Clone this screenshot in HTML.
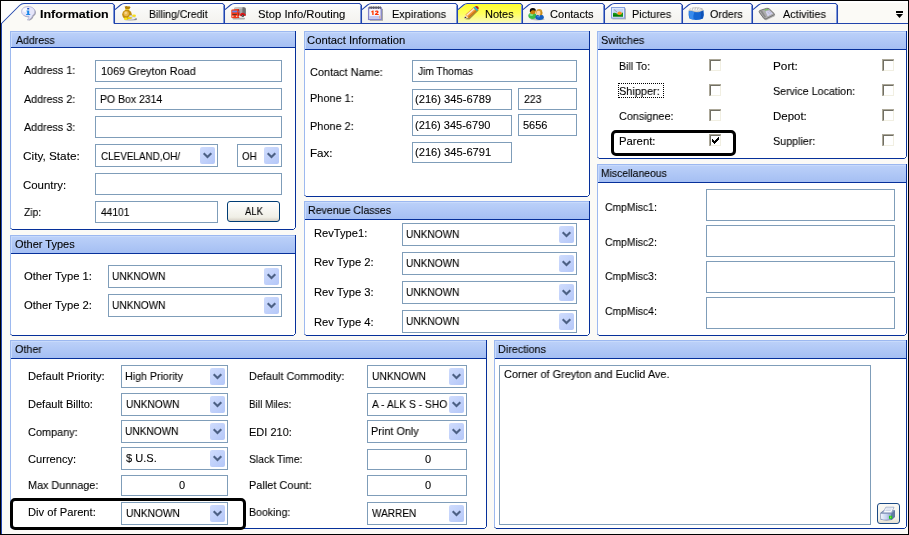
<!DOCTYPE html>
<html><head><meta charset="utf-8"><title>Company Profile</title>
<style>
html,body{margin:0;padding:0;}
body{width:909px;height:535px;position:relative;overflow:hidden;background:#fbfaf6;font-family:"Liberation Sans",sans-serif;font-size:11px;color:#000;}
.t{position:absolute;white-space:nowrap;line-height:13px;height:13px;transform-origin:0 0;will-change:transform;-webkit-text-stroke:0.1px #000;}
.frame{position:absolute;left:0;top:0;width:909px;height:535px;box-sizing:border-box;border:1px solid #000;z-index:5;pointer-events:none}
.frame:after{content:"";position:absolute;left:0;top:22px;width:1px;bottom:0;background:#2448b0}
.p{position:absolute;}
.ph{position:absolute;left:0;top:0;right:0;box-sizing:border-box;border-top:1px solid #9cb8f0;border-left:1px solid #9cb8f0;background:linear-gradient(#bcd1f9,#a5bff3);box-shadow:inset 1px 1px 0 #c8dafb;}
.pl{position:absolute;left:0;right:0;height:1px;background:#06309a;}
.pb{position:absolute;left:1px;right:1px;background:#fff;}
.pc{position:absolute;left:0;top:0;}
.i{position:absolute;border:1px solid #7f9db9;background:#fff;}
.cb{position:absolute;background:linear-gradient(135deg,#cfdcfd,#b4c7f8);border-radius:2px;}
.cb svg{position:absolute;left:0;top:0}
.ck{position:absolute;width:11px;height:11px;background:#fff;border-top:1px solid #aca899;border-left:1px solid #aca899;}
.ck i{position:absolute;left:0;top:0;width:9px;height:9px;border-top:1px solid #716f64;border-left:1px solid #716f64;border-right:1px solid #f1efe2;border-bottom:1px solid #f1efe2;}
.btn{position:absolute;border:1px solid #003c74;border-radius:3px;background:linear-gradient(#fff,#f0efe6 80%,#d6d0c5);}
.hl{position:absolute;border:3px solid #000;border-radius:5px;}
.foc{position:absolute;border:1px dotted #000;}
</style></head>
<body>
<div class="frame"></div>
<svg class="tabs" width="909" height="32" viewBox="0 0 909 32" style="position:absolute;left:0;top:0">
<defs><linearGradient id="yg" x1="0" y1="0" x2="0" y2="1"><stop offset="0" stop-color="#ffff28"/><stop offset="0.5" stop-color="#ffff5c"/><stop offset="1" stop-color="#f8f8c4"/></linearGradient><linearGradient id="ig" x1="0" y1="0" x2="0" y2="1"><stop offset="0" stop-color="#ffffff"/><stop offset="0.3" stop-color="#f9f9f7"/><stop offset="1" stop-color="#f3f2ee"/></linearGradient></defs>
<rect x="1" y="1" width="907" height="2" fill="#ffffff"/>
<path d="M1 1 H26 V4 L1 24Z" fill="#fefefd"/>
<path d="M752.5 23.5 V10 L758.5 5 Q760.5 3.5 762.5 3.5 H835.5 L837.5 5.5 V23.5 Z" fill="url(#ig)" stroke="none"/>
<path d="M753 4 H761 L753 10Z" fill="#fdfdfc"/>
<path d="M836.5 5.5 V23" fill="none" stroke="#7f99dc" stroke-width="1"/>
<path d="M753 9.6 L758.5 5 Q760.5 3.5 762.5 3.5 H835.5 L837.5 5.5 V23.5" fill="none" stroke="#2144ac" stroke-width="1.05"/>
<path d="M682.5 23.5 V10 L688.5 5 Q690.5 3.5 692.5 3.5 H750.5 L752.5 5.5 V23.5 Z" fill="url(#ig)" stroke="none"/>
<path d="M683 4 H691 L683 10Z" fill="#fdfdfc"/>
<path d="M751.5 5.5 V23" fill="none" stroke="#7f99dc" stroke-width="1"/>
<path d="M683 9.6 L688.5 5 Q690.5 3.5 692.5 3.5 H750.5 L752.5 5.5 V23.5" fill="none" stroke="#2144ac" stroke-width="1.05"/>
<path d="M604.5 23.5 V10 L610.5 5 Q612.5 3.5 614.5 3.5 H680.5 L682.5 5.5 V23.5 Z" fill="url(#ig)" stroke="none"/>
<path d="M605 4 H613 L605 10Z" fill="#fdfdfc"/>
<path d="M681.5 5.5 V23" fill="none" stroke="#7f99dc" stroke-width="1"/>
<path d="M605 9.6 L610.5 5 Q612.5 3.5 614.5 3.5 H680.5 L682.5 5.5 V23.5" fill="none" stroke="#2144ac" stroke-width="1.05"/>
<path d="M522.5 23.5 V10 L528.5 5 Q530.5 3.5 532.5 3.5 H602.5 L604.5 5.5 V23.5 Z" fill="url(#ig)" stroke="none"/>
<path d="M523 4 H531 L523 10Z" fill="#fdfdfc"/>
<path d="M603.5 5.5 V23" fill="none" stroke="#7f99dc" stroke-width="1"/>
<path d="M523 9.6 L528.5 5 Q530.5 3.5 532.5 3.5 H602.5 L604.5 5.5 V23.5" fill="none" stroke="#2144ac" stroke-width="1.05"/>
<path d="M457.5 23.5 V10 L463.5 5 Q465.5 3.5 467.5 3.5 H520.5 L522.5 5.5 V23.5 Z" fill="url(#yg)" stroke="none"/>
<path d="M458 4 H466 L458 10Z" fill="#fdfdfc"/>
<path d="M521.5 5.5 V23" fill="none" stroke="#7f99dc" stroke-width="1"/>
<path d="M458 9.6 L463.5 5 Q465.5 3.5 467.5 3.5 H520.5 L522.5 5.5 V23.5" fill="none" stroke="#2144ac" stroke-width="1.05"/>
<path d="M361.5 23.5 V10 L367.5 5 Q369.5 3.5 371.5 3.5 H455.5 L457.5 5.5 V23.5 Z" fill="url(#ig)" stroke="none"/>
<path d="M362 4 H370 L362 10Z" fill="#fdfdfc"/>
<path d="M456.5 5.5 V23" fill="none" stroke="#7f99dc" stroke-width="1"/>
<path d="M362 9.6 L367.5 5 Q369.5 3.5 371.5 3.5 H455.5 L457.5 5.5 V23.5" fill="none" stroke="#2144ac" stroke-width="1.05"/>
<path d="M224.5 23.5 V10 L230.5 5 Q232.5 3.5 234.5 3.5 H359.5 L361.5 5.5 V23.5 Z" fill="url(#ig)" stroke="none"/>
<path d="M225 4 H233 L225 10Z" fill="#fdfdfc"/>
<path d="M360.5 5.5 V23" fill="none" stroke="#7f99dc" stroke-width="1"/>
<path d="M225 9.6 L230.5 5 Q232.5 3.5 234.5 3.5 H359.5 L361.5 5.5 V23.5" fill="none" stroke="#2144ac" stroke-width="1.05"/>
<path d="M114.5 23.5 V10 L120.5 5 Q122.5 3.5 124.5 3.5 H222.5 L224.5 5.5 V23.5 Z" fill="url(#ig)" stroke="none"/>
<path d="M115 4 H123 L115 10Z" fill="#fdfdfc"/>
<path d="M223.5 5.5 V23" fill="none" stroke="#7f99dc" stroke-width="1"/>
<path d="M115 9.6 L120.5 5 Q122.5 3.5 124.5 3.5 H222.5 L224.5 5.5 V23.5" fill="none" stroke="#2144ac" stroke-width="1.05"/>
<path d="M115 23.5 H908" stroke="#2144ac" stroke-width="1.05" fill="none"/>
<path d="M1.5 23.5 L19.5 5.5 Q21.5 3.5 24 3.5 H112.5 L114.5 5.5 V24 V32 H1.5 Z" fill="#fbfaf6" stroke="none"/>
<path d="M113.5 5.5 V23.5" fill="none" stroke="#7f99dc" stroke-width="1"/>
<path d="M1.5 23.5 L19.5 5.5 Q21.5 3.5 24 3.5 H112.5 L114.5 5.5 V24" fill="none" stroke="#2144ac" stroke-width="1.05"/>
<rect x="896" y="11" width="7" height="2" fill="#000"/><path d="M896 14 H903 L899.5 18 Z" fill="#000"/>
<g transform="translate(21,6)">
<path d="M8 1.6 C4 1.6 1.6 3.8 1.6 6.4 C1.6 9 4 11.2 8 11.2 C8.3 11.2 8.6 11.2 8.9 11.1 C9 12.6 8.3 13.8 7.2 14.8 C10.2 14.4 12 12.6 12.6 10.2 C14 9.3 14.9 8 14.9 6.4 C14.9 3.8 12 1.6 8 1.6Z" fill="#77778c" opacity="0.7"/>
<path d="M7 0.5 C3 0.5 0.5 2.8 0.5 5.5 C0.5 8.2 3 10.4 7 10.4 C7.3 10.4 7.6 10.4 7.9 10.3 C8 11.8 7.3 13 6.2 14 C9.2 13.6 11 11.8 11.6 9.4 C13 8.5 13.8 7.2 13.8 5.5 C13.8 2.8 11 0.5 7 0.5Z" fill="#e6e6fa" stroke="#b0b0d4" stroke-width="0.8"/>
<ellipse cx="5" cy="4" rx="3.2" ry="2" fill="#fff" opacity="0.8"/>
<rect x="6.2" y="2" width="2" height="1.5" fill="#1a50c8"/>
<path d="M5.5 4.5 H8.2 V8 H9.2 V9 H5.2 V8 H6.2 V5.5 H5.5Z" fill="#1a86e8"/>
</g>
<g transform="translate(122,6)">
<ellipse cx="8.5" cy="13.6" rx="6.5" ry="1.3" fill="#777" opacity="0.35"/>
<path d="M2.6 0.6 Q4.6 -0.4 6 0.5 Q7.6 -0.1 8.6 1.2 L7 3.5 H3.6 Z" fill="#b4820a"/>
<rect x="3.3" y="3.1" width="4" height="1.2" fill="#f4dc2c"/>
<circle cx="5" cy="8.6" r="4.8" fill="#c48e0c"/>
<circle cx="4.2" cy="7.6" r="2.6" fill="#eebc58" opacity="0.9"/>
<circle cx="3.8" cy="7" r="1.2" fill="#f8d890" opacity="0.9"/>
<ellipse cx="13.2" cy="13" rx="1.9" ry="1.1" fill="#6a6a6a" opacity="0.7"/>
<ellipse cx="3.8" cy="12.8" rx="1.9" ry="1.2" fill="#f8e418"/>
<ellipse cx="7.8" cy="11.7" rx="2.2" ry="1.2" fill="#f2d614"/>
<ellipse cx="8.8" cy="10.2" rx="1.7" ry="0.9" fill="#e4e8f8" stroke="#9aa0c0" stroke-width="0.3"/>
<ellipse cx="12" cy="9.8" rx="2" ry="1.2" fill="#f8e01c"/>
<ellipse cx="11.6" cy="12.2" rx="2" ry="1.1" fill="#f0f2fc" stroke="#9aa0c0" stroke-width="0.3"/>
</g>
<g transform="translate(231,7)">
<rect x="1.4" y="10.8" width="12.6" height="1.6" rx="0.8" fill="#666" opacity="0.5"/>
<path d="M3.2 1.6 Q3.2 0.6 4.4 0.5 L12.6 0.2 Q14.8 0.2 14.8 2 V8.4 L8 8.8 L3.2 6Z" fill="#a6a6a6"/>
<path d="M11.4 0.3 L12.6 0.2 Q14.8 0.2 14.8 2 V8.4 L11.4 8.6Z" fill="#707070"/>
<path d="M3.2 1.6 Q3.2 0.6 4.4 0.5 L11.4 0.3 V1.6 L3.2 2.4Z" fill="#c4c4c4"/>
<path d="M9 7.4 Q9.4 5.8 11.6 5.8 Q13.8 5.8 14.6 7.6 L14.6 8.8 L9 9.2Z" fill="#e41414"/>
<circle cx="11.8" cy="8.8" r="1.3" fill="#303030"/>
<circle cx="11.8" cy="8.8" r="0.5" fill="#c8c8c8"/>
<path d="M0.3 3.2 Q0.3 2.4 1.2 2.4 L6.6 2.1 Q8 2.1 8.2 3.4 L8.5 10.6 Q5 11.6 0.3 10.8Z" fill="#f23816"/>
<path d="M6.8 2.1 Q8 2.1 8.2 3.4 L8.5 10.6 L7.2 11 V2.2Z" fill="#c41606"/>
<rect x="1.2" y="3.6" width="5" height="1.8" fill="#6c88e8"/>
<rect x="7.3" y="3.8" width="0.9" height="1.7" fill="#5c78d8"/>
<rect x="1.4" y="7" width="4.4" height="1.1" fill="#5c3428"/>
<rect x="1.2" y="8.7" width="1.3" height="1" fill="#fff"/>
<rect x="5" y="8.7" width="1.3" height="1" fill="#fff"/>
<circle cx="8.6" cy="9.6" r="1" fill="#f0f0f0"/>
</g>
<g transform="translate(368,6)">
<rect x="1.8" y="2.8" width="13.2" height="12" fill="#666" opacity="0.55"/>
<rect x="0.6" y="1.8" width="12.6" height="11.6" fill="#f4f4fd" stroke="#8484c8" stroke-width="1.3"/>
<rect x="1" y="10" width="11.6" height="2.8" fill="#c4c8f0"/>
<rect x="11.4" y="9.6" width="0.9" height="3" fill="#f0a060"/>
<path d="M2 0.3 V3 M3.7 0.3 V3 M5.4 0.3 V3 M7.1 0.3 V3 M8.8 0.3 V3 M10.5 0.3 V3 M12.2 0.3 V3" stroke="#505058" stroke-width="0.9"/>
<path d="M1.6 1.4 H12.6" stroke="#606068" stroke-width="1"/>
<path d="M3.2 5.6 L4.8 4.6 H5.6 V9 H4.2 V6 L3.2 6.4Z" fill="#ff3c00"/>
<path d="M7 5.8 Q7 4.6 8.8 4.6 Q10.6 4.6 10.6 5.9 Q10.6 6.8 8.8 7.9 H10.7 V9 H6.9 V8 Q9.2 6.6 9.2 6 Q9.2 5.6 8.8 5.6 Q8.3 5.6 8.3 6.2Z" fill="#ff3000"/>
</g>
<g transform="translate(464,6)">
<path d="M1.4 13.2 L5.4 13.6 L14.6 4.6 L13.4 2.6Z" fill="#4a3a10" opacity="0.55"/>
<path d="M0.5 12.2 L1.4 8.6 L4.9 11.9Z" fill="#f8dcae"/>
<path d="M0.5 12.2 L1 10.4 L2.6 11.9Z" fill="#10104e"/>
<path d="M1.4 8.6 L9.4 1.6 L12.8 4.9 L4.9 11.9Z" fill="#f0983a"/>
<path d="M2.2 8.8 L9.9 2.1 L10.9 3 L3.2 9.8Z" fill="#fdebd0"/>
<path d="M4 10.9 L11.9 4 L12.8 4.9 L4.9 11.9Z" fill="#c87418"/>
<path d="M9.4 1.6 L10.9 0.4 L14.2 3.6 L12.8 4.9Z" fill="#34a4ee"/>
<path d="M9.4 1.6 L9.9 1.2 L13.3 4.5 L12.8 4.9Z" fill="#44c05c"/>
<path d="M10.9 0.4 Q12.6 -0.8 14.2 0.8 Q15.4 2.2 14.2 3.6Z" fill="#b42020"/>
</g>
<g transform="translate(528,8)">
<ellipse cx="9.6" cy="11.2" rx="7" ry="1.2" fill="#666" opacity="0.4"/>
<ellipse cx="4.4" cy="7.8" rx="4.1" ry="3.1" fill="#3cbc44"/>
<ellipse cx="3.4" cy="6.8" rx="1.9" ry="1.2" fill="#8cec94" opacity="0.85"/>
<circle cx="4.8" cy="3.3" r="2.9" fill="#cc8008"/>
<path d="M1.8 3.2 Q1.7 0 4.8 0 Q7.9 0 7.8 2.8 Q5.8 1.8 4.2 2.3 Q2.9 2.8 2.5 4.2Z" fill="#0c0c0c"/>
<ellipse cx="11.6" cy="9.2" rx="4.2" ry="2.7" fill="#125ec0"/>
<ellipse cx="10.4" cy="8.6" rx="1.6" ry="0.9" fill="#4a90e8" opacity="0.8"/>
<path d="M10.5 6.6 L11.3 8.4 L12.1 6.6Z" fill="#c4ecff"/>
<circle cx="11.2" cy="4.2" r="3.1" fill="#d49c2c"/>
<path d="M13.4 2.4 Q14.9 4 14 7.2 L12.4 6.8Z" fill="#c48c1c"/>
<ellipse cx="10.5" cy="4.9" rx="1.9" ry="2.2" fill="#ffd2a4"/>
</g>
<g transform="translate(611,7)">
<rect x="1.4" y="1.4" width="13.6" height="11" fill="#666" opacity="0.45"/>
<rect x="0.5" y="0.5" width="13" height="10.6" fill="#dfe9fc" stroke="#86a2e2" stroke-width="1"/>
<rect x="2" y="2" width="10" height="7.6" fill="#c6d6f6"/>
<path d="M2 6 Q5 5 7 7.4 L12 5.4 V9.6 H2Z" fill="#1c9c1c"/>
<path d="M2 7.6 Q5 7 12 9 V9.6 H2Z" fill="#087808"/>
<ellipse cx="8.6" cy="6.3" rx="2.2" ry="1.7" fill="#ff9020"/>
<path d="M3 2.6 L6 5" stroke="#808890" stroke-width="0.7"/>
</g>
<g transform="translate(688,7)">
<path d="M1.6 1.8 Q8 -1 14.6 1.6 L15 5 H1.4Z" fill="#b8b8b8"/>
<path d="M2.4 1.8 L4 0.6 L5.2 1.8 L6.4 0.4 L7.8 1.8 L9 0.3 L10.4 1.8 L11.6 0.5 L13 1.9 L14 3.6 H2.2Z" fill="#f6f6f6"/>
<path d="M3 3 H13.4 L14.2 4.6 H2.2Z" fill="#e2e2e2"/>
<path d="M4.4 1.2 V3 M7 1 V3 M9.6 1 V3 M12 1.2 V3" stroke="#9a9a9a" stroke-width="0.5"/>
<path d="M0.7 3.6 Q4 3 6.4 4.6 Q10 5.8 15.4 3 Q16.4 8 15 11.4 Q8 14.6 1.4 11.6 Q0.2 8 0.7 3.6Z" fill="#1566d2"/>
<path d="M1.2 4.2 Q4 3.8 6.2 5.2 Q5 8 5.6 12.6 Q3 12.2 1.9 11.4 Q0.8 8 1.2 4.2Z" fill="#3e92f2" opacity="0.85"/>
<path d="M12.6 4.8 Q14 4.4 15.2 3.6 Q16 8 14.8 11.2 Q13.6 11.9 12.4 12.3 Q13.4 8 12.6 4.8Z" fill="#0c4cae" opacity="0.8"/>
<path d="M0.7 3.6 Q4 3 6.4 4.6 Q10 5.8 15.4 3" fill="none" stroke="#f6dcb4" stroke-width="0.6"/>
</g>
<g transform="translate(758,8)">
<path d="M1.8 3.2 L8.6 1 Q10.4 0.6 11.6 1.6 L16.6 6.2 Q17 7 16 7.6 L8.4 11.4 Q7 12 6 11 L1.6 5 Q1 3.8 1.8 3.2Z" fill="#555" opacity="0.4" transform="translate(0.5,0.6)"/>
<path d="M1.6 2.6 L8.4 0.4 Q10.2 0 11.4 1 L16.2 5.6 Q16.8 6.4 15.8 7 L8.2 10.8 Q6.8 11.4 5.8 10.4 L1.4 4.4 Q0.8 3.2 1.6 2.6Z" fill="#adadad" stroke="#5e5e5e" stroke-width="0.8"/>
<path d="M7.6 3.6 L11.4 2.4 L14.8 5.6 L9.6 8.2Z" fill="#dcdcf6"/><path d="M8.6 5 L12.4 3.4 M9.2 6.4 L13.4 4.4 M9.6 3 L12 7 M11 2.6 L13.6 6.2" stroke="#a8a8c8" stroke-width="0.4"/>
<path d="M2.2 3 L4 2.4 L8 9 L6.6 9.8Z" fill="#8a8a8a"/>
<path d="M6.6 1.8 L10 0.9 L10.8 1.6 L7.2 2.6Z" fill="#5ed83c"/>
</g>
</svg>
<div class="t" id="t0" style="left:40.00px;top:8px;font-weight:bold;transform:scaleX(1.1358);">Information</div>
<div class="t" id="t1" style="left:149.00px;top:8px;transform:scaleX(0.9491);">Billing/Credit</div>
<div class="t" id="t2" style="left:257.70px;top:8px;transform:scaleX(1.0269);">Stop Info/Routing</div>
<div class="t" id="t3" style="left:391.60px;top:8px;transform:scaleX(0.9916);">Expirations</div>
<div class="t" id="t4" style="left:484.80px;top:8px;transform:scaleX(0.9962);">Notes</div>
<div class="t" id="t5" style="left:549.80px;top:8px;transform:scaleX(1.0052);">Contacts</div>
<div class="t" id="t6" style="left:632.30px;top:8px;transform:scaleX(0.9860);">Pictures</div>
<div class="t" id="t7" style="left:710.00px;top:8px;transform:scaleX(0.9745);">Orders</div>
<div class="t" id="t8" style="left:783.00px;top:8px;transform:scaleX(0.9872);">Activities</div>
<div class="p" style="left:10px;top:31px;width:286px;height:199px;"><div class="ph" style="height:16px"></div><div class="pl" style="top:16px"></div><div class="pb" style="top:17px;height:181px"></div><svg class="pc" width="286" height="199" viewBox="0 0 286 199"><path d="M285.5 0 V196.5 L283.5 198.5 H2 L0.5 197" fill="none" stroke="#06309a" stroke-width="1"/><path d="M0.5 0 V197" fill="none" stroke="#9db9ef" stroke-width="1"/></svg></div>
<div class="t" id="t9" style="left:16.00px;top:34px;transform:scaleX(0.9600);">Address</div>
<div class="t" id="t10" style="left:24.00px;top:64px;transform:scaleX(0.9728);">Address 1:</div>
<div class="t" id="t11" style="left:24.00px;top:93px;transform:scaleX(0.9728);">Address 2:</div>
<div class="t" id="t12" style="left:24.00px;top:121px;transform:scaleX(0.9728);">Address 3:</div>
<div class="t" id="t13" style="left:23.00px;top:150px;transform:scaleX(1.0714);">City, State:</div>
<div class="t" id="t14" style="left:23.00px;top:179px;transform:scaleX(1.0393);">Country:</div>
<div class="t" id="t15" style="left:24.00px;top:206px;transform:scaleX(0.9352);">Zip:</div>
<div class="i" style="left:95px;top:60px;width:185px;height:20px"></div>
<div class="t" id="t16" style="left:100.60px;top:65px;transform:scaleX(0.9856);">1069 Greyton Road</div>
<div class="i" style="left:95px;top:88px;width:185px;height:20px"></div>
<div class="t" id="t17" style="left:100.00px;top:93px;transform:scaleX(0.9515);">PO Box 2314</div>
<div class="i" style="left:95px;top:116px;width:185px;height:20px"></div>
<div class="i" style="left:95px;top:144px;width:121px;height:21px"></div>
<div class="cb" style="left:200px;top:147px;width:15px;height:17px"><svg width="15" height="17" viewBox="0 0 15 17"><path d="M3.7 6.2 L7.5 10 L11.3 6.2" fill="none" stroke="#4d6185" stroke-width="2.1"/></svg></div>
<div class="t" id="t18" style="left:101.00px;top:150px;transform:scaleX(0.8990);">CLEVELAND,OH/</div>
<div class="i" style="left:237px;top:144px;width:43px;height:21px"></div>
<div class="cb" style="left:264px;top:147px;width:15px;height:17px"><svg width="15" height="17" viewBox="0 0 15 17"><path d="M3.7 6.2 L7.5 10 L11.3 6.2" fill="none" stroke="#4d6185" stroke-width="2.1"/></svg></div>
<div class="t" id="t19" style="left:242.00px;top:150px;transform:scaleX(0.8962);">OH</div>
<div class="i" style="left:95px;top:173px;width:185px;height:20px"></div>
<div class="i" style="left:95px;top:201px;width:121px;height:20px"></div>
<div class="t" id="t20" style="left:101.00px;top:206px;transform:scaleX(0.9289);">44101</div>
<div class="btn" style="left:227px;top:201px;width:51px;height:19px"></div>
<div class="t" id="t21" style="left:245.00px;top:205px;transform:scaleX(0.8638);">ALK</div>
<div class="p" style="left:10px;top:235px;width:286px;height:101px;"><div class="ph" style="height:18px"></div><div class="pl" style="top:18px"></div><div class="pb" style="top:19px;height:81px"></div><svg class="pc" width="286" height="101" viewBox="0 0 286 101"><path d="M285.5 0 V98.5 L283.5 100.5 H2 L0.5 99" fill="none" stroke="#06309a" stroke-width="1"/><path d="M0.5 0 V99" fill="none" stroke="#9db9ef" stroke-width="1"/></svg></div>
<div class="t" id="t22" style="left:15.00px;top:238px;transform:scaleX(0.9993);">Other Types</div>
<div class="t" id="t23" style="left:24.00px;top:270px;transform:scaleX(1.0215);">Other Type 1:</div>
<div class="t" id="t24" style="left:24.00px;top:299px;transform:scaleX(1.0215);">Other Type 2:</div>
<div class="i" style="left:108px;top:265px;width:172px;height:21px"></div>
<div class="cb" style="left:264px;top:268px;width:15px;height:17px"><svg width="15" height="17" viewBox="0 0 15 17"><path d="M3.7 6.2 L7.5 10 L11.3 6.2" fill="none" stroke="#4d6185" stroke-width="2.1"/></svg></div>
<div class="t" id="t25" style="left:111.60px;top:270px;transform:scaleX(0.9216);">UNKNOWN</div>
<div class="i" style="left:108px;top:294px;width:172px;height:21px"></div>
<div class="cb" style="left:264px;top:297px;width:15px;height:17px"><svg width="15" height="17" viewBox="0 0 15 17"><path d="M3.7 6.2 L7.5 10 L11.3 6.2" fill="none" stroke="#4d6185" stroke-width="2.1"/></svg></div>
<div class="t" id="t26" style="left:111.60px;top:299px;transform:scaleX(0.9216);">UNKNOWN</div>
<div class="p" style="left:304px;top:31px;width:286px;height:166px;"><div class="ph" style="height:18px"></div><div class="pl" style="top:18px"></div><div class="pb" style="top:19px;height:146px"></div><svg class="pc" width="286" height="166" viewBox="0 0 286 166"><path d="M285.5 0 V163.5 L283.5 165.5 H2 L0.5 164" fill="none" stroke="#06309a" stroke-width="1"/><path d="M0.5 0 V164" fill="none" stroke="#9db9ef" stroke-width="1"/></svg></div>
<div class="t" id="t27" style="left:307.40px;top:34px;transform:scaleX(1.0229);">Contact Information</div>
<div class="t" id="t28" style="left:310.00px;top:66px;transform:scaleX(0.9915);">Contact Name:</div>
<div class="t" id="t29" style="left:310.00px;top:92px;transform:scaleX(0.9913);">Phone 1:</div>
<div class="t" id="t30" style="left:310.00px;top:120px;transform:scaleX(0.9913);">Phone 2:</div>
<div class="t" id="t31" style="left:310.00px;top:147px;transform:scaleX(1.0542);">Fax:</div>
<div class="i" style="left:412px;top:60px;width:163px;height:20px"></div>
<div class="t" id="t32" style="left:417.50px;top:65px;transform:scaleX(0.9205);">Jim Thomas</div>
<div class="i" style="left:412px;top:89px;width:98px;height:19px"></div>
<div class="t" id="t33" style="left:414.50px;top:93px;transform:scaleX(1.0132);">(216) 345-6789</div>
<div class="i" style="left:518px;top:88px;width:57px;height:20px"></div>
<div class="t" id="t34" style="left:524.00px;top:93px;transform:scaleX(0.9556);">223</div>
<div class="i" style="left:412px;top:115px;width:98px;height:19px"></div>
<div class="t" id="t35" style="left:414.50px;top:119px;transform:scaleX(1.0024);">(216) 345-6790</div>
<div class="i" style="left:518px;top:114px;width:57px;height:20px"></div>
<div class="t" id="t36" style="left:523.00px;top:119px;transform:scaleX(1.0008);">5656</div>
<div class="i" style="left:412px;top:142px;width:98px;height:19px"></div>
<div class="t" id="t37" style="left:414.50px;top:146px;transform:scaleX(1.0132);">(216) 345-6791</div>
<div class="p" style="left:304px;top:201px;width:286px;height:135px;"><div class="ph" style="height:18px"></div><div class="pl" style="top:18px"></div><div class="pb" style="top:19px;height:115px"></div><svg class="pc" width="286" height="135" viewBox="0 0 286 135"><path d="M285.5 0 V132.5 L283.5 134.5 H2 L0.5 133" fill="none" stroke="#06309a" stroke-width="1"/><path d="M0.5 0 V133" fill="none" stroke="#9db9ef" stroke-width="1"/></svg></div>
<div class="t" id="t38" style="left:307.60px;top:204px;transform:scaleX(0.9634);">Revenue Classes</div>
<div class="t" id="t39" style="left:314.00px;top:227px;transform:scaleX(1.0131);">RevType1:</div>
<div class="t" id="t40" style="left:314.00px;top:256px;transform:scaleX(1.0200);">Rev Type 2:</div>
<div class="t" id="t41" style="left:314.00px;top:286px;transform:scaleX(1.0200);">Rev Type 3:</div>
<div class="t" id="t42" style="left:314.00px;top:316px;transform:scaleX(1.0200);">Rev Type 4:</div>
<div class="i" style="left:402px;top:223px;width:173px;height:21px"></div>
<div class="cb" style="left:559px;top:226px;width:15px;height:17px"><svg width="15" height="17" viewBox="0 0 15 17"><path d="M3.7 6.2 L7.5 10 L11.3 6.2" fill="none" stroke="#4d6185" stroke-width="2.1"/></svg></div>
<div class="t" id="t43" style="left:406.00px;top:228px;transform:scaleX(0.9204);">UNKNOWN</div>
<div class="i" style="left:402px;top:252px;width:173px;height:21px"></div>
<div class="cb" style="left:559px;top:255px;width:15px;height:17px"><svg width="15" height="17" viewBox="0 0 15 17"><path d="M3.7 6.2 L7.5 10 L11.3 6.2" fill="none" stroke="#4d6185" stroke-width="2.1"/></svg></div>
<div class="t" id="t44" style="left:406.00px;top:257px;transform:scaleX(0.9204);">UNKNOWN</div>
<div class="i" style="left:402px;top:281px;width:173px;height:21px"></div>
<div class="cb" style="left:559px;top:284px;width:15px;height:17px"><svg width="15" height="17" viewBox="0 0 15 17"><path d="M3.7 6.2 L7.5 10 L11.3 6.2" fill="none" stroke="#4d6185" stroke-width="2.1"/></svg></div>
<div class="t" id="t45" style="left:406.00px;top:286px;transform:scaleX(0.9204);">UNKNOWN</div>
<div class="i" style="left:402px;top:310px;width:173px;height:21px"></div>
<div class="cb" style="left:559px;top:313px;width:15px;height:17px"><svg width="15" height="17" viewBox="0 0 15 17"><path d="M3.7 6.2 L7.5 10 L11.3 6.2" fill="none" stroke="#4d6185" stroke-width="2.1"/></svg></div>
<div class="t" id="t46" style="left:406.00px;top:315px;transform:scaleX(0.9204);">UNKNOWN</div>
<div class="p" style="left:597px;top:31px;width:310px;height:128px;"><div class="ph" style="height:18px"></div><div class="pl" style="top:18px"></div><div class="pb" style="top:19px;height:108px"></div><svg class="pc" width="310" height="128" viewBox="0 0 310 128"><path d="M309.5 0 V125.5 L307.5 127.5 H2 L0.5 126" fill="none" stroke="#06309a" stroke-width="1"/><path d="M0.5 0 V126" fill="none" stroke="#9db9ef" stroke-width="1"/></svg></div>
<div class="t" id="t47" style="left:600.60px;top:34px;transform:scaleX(0.9841);">Switches</div>
<div class="t" id="t48" style="left:619.00px;top:60px;transform:scaleX(0.9619);">Bill To:</div>
<div class="t" id="t49" style="left:619.00px;top:85px;transform:scaleX(0.9907);">Shipper:</div>
<div class="t" id="t50" style="left:619.00px;top:110px;transform:scaleX(0.9800);">Consignee:</div>
<div class="t" id="t51" style="left:619.00px;top:135px;transform:scaleX(1.0295);">Parent:</div>
<div class="t" id="t52" style="left:773.00px;top:60px;transform:scaleX(1.0714);">Port:</div>
<div class="t" id="t53" style="left:773.00px;top:85px;transform:scaleX(0.9729);">Service Location:</div>
<div class="t" id="t54" style="left:773.00px;top:110px;transform:scaleX(1.0415);">Depot:</div>
<div class="t" id="t55" style="left:773.00px;top:135px;transform:scaleX(0.9775);">Supplier:</div>
<div class="ck" style="left:709px;top:59px"><i></i></div>
<div class="ck" style="left:882px;top:59px"><i></i></div>
<div class="ck" style="left:709px;top:84px"><i></i></div>
<div class="ck" style="left:882px;top:84px"><i></i></div>
<div class="ck" style="left:709px;top:109px"><i></i></div>
<div class="ck" style="left:882px;top:109px"><i></i></div>
<div class="ck" style="left:709px;top:134px"><i></i><svg width="13" height="13" viewBox="0 0 13 13" shape-rendering="crispEdges" style="position:absolute;left:-1px;top:-1px"><g fill="#000"><rect x="3" y="5" width="1" height="3"/><rect x="4" y="6" width="1" height="3"/><rect x="5" y="7" width="1" height="3"/><rect x="6" y="6" width="1" height="3"/><rect x="7" y="5" width="1" height="3"/><rect x="8" y="4" width="1" height="3"/><rect x="9" y="3" width="1" height="3"/></g></svg></div>
<div class="ck" style="left:882px;top:134px"><i></i></div>
<div class="foc" style="left:618px;top:83px;width:44px;height:13px"></div>
<div class="hl" style="left:611px;top:130px;width:119px;height:20px"></div>
<div class="p" style="left:597px;top:164px;width:310px;height:172px;"><div class="ph" style="height:18px"></div><div class="pl" style="top:18px"></div><div class="pb" style="top:19px;height:152px"></div><svg class="pc" width="310" height="172" viewBox="0 0 310 172"><path d="M309.5 0 V169.5 L307.5 171.5 H2 L0.5 170" fill="none" stroke="#06309a" stroke-width="1"/><path d="M0.5 0 V170" fill="none" stroke="#9db9ef" stroke-width="1"/></svg></div>
<div class="t" id="t56" style="left:600.60px;top:167px;transform:scaleX(0.9434);">Miscellaneous</div>
<div class="t" id="t57" style="left:605.00px;top:201px;transform:scaleX(0.9419);">CmpMisc1:</div>
<div class="t" id="t58" style="left:605.00px;top:236px;transform:scaleX(0.9419);">CmpMisc2:</div>
<div class="t" id="t59" style="left:605.00px;top:270px;transform:scaleX(0.9419);">CmpMisc3:</div>
<div class="t" id="t60" style="left:605.00px;top:305px;transform:scaleX(0.9419);">CmpMisc4:</div>
<div class="i" style="left:706px;top:189px;width:187px;height:30px"></div>
<div class="i" style="left:706px;top:225px;width:187px;height:30px"></div>
<div class="i" style="left:706px;top:261px;width:187px;height:30px"></div>
<div class="i" style="left:706px;top:297px;width:187px;height:30px"></div>
<div class="p" style="left:10px;top:340px;width:477px;height:189px;"><div class="ph" style="height:18px"></div><div class="pl" style="top:18px"></div><div class="pb" style="top:19px;height:169px"></div><svg class="pc" width="477" height="189" viewBox="0 0 477 189"><path d="M476.5 0 V186.5 L474.5 188.5 H2 L0.5 187" fill="none" stroke="#06309a" stroke-width="1"/><path d="M0.5 0 V187" fill="none" stroke="#9db9ef" stroke-width="1"/></svg></div>
<div class="t" id="t61" style="left:15.00px;top:343px;transform:scaleX(0.9795);">Other</div>
<div class="t" id="t62" style="left:28.00px;top:370px;transform:scaleX(1.0200);">Default Priority:</div>
<div class="t" id="t63" style="left:28.00px;top:398px;transform:scaleX(1.0016);">Default Billto:</div>
<div class="t" id="t64" style="left:28.00px;top:426px;transform:scaleX(0.9908);">Company:</div>
<div class="t" id="t65" style="left:28.00px;top:453px;transform:scaleX(1.0098);">Currency:</div>
<div class="t" id="t66" style="left:28.00px;top:479px;transform:scaleX(0.9832);">Max Dunnage:</div>
<div class="t" id="t67" style="left:28.00px;top:506px;transform:scaleX(1.0175);">Div of Parent:</div>
<div class="i" style="left:121px;top:365px;width:105px;height:21px"></div>
<div class="cb" style="left:210px;top:368px;width:15px;height:17px"><svg width="15" height="17" viewBox="0 0 15 17"><path d="M3.7 6.2 L7.5 10 L11.3 6.2" fill="none" stroke="#4d6185" stroke-width="2.1"/></svg></div>
<div class="t" id="t68" style="left:124.60px;top:370px;transform:scaleX(0.9678);">High Priority</div>
<div class="i" style="left:121px;top:393px;width:105px;height:21px"></div>
<div class="cb" style="left:210px;top:396px;width:15px;height:17px"><svg width="15" height="17" viewBox="0 0 15 17"><path d="M3.7 6.2 L7.5 10 L11.3 6.2" fill="none" stroke="#4d6185" stroke-width="2.1"/></svg></div>
<div class="t" id="t69" style="left:126.40px;top:398px;transform:scaleX(0.9216);">UNKNOWN</div>
<div class="i" style="left:121px;top:420px;width:105px;height:21px"></div>
<div class="cb" style="left:210px;top:423px;width:15px;height:17px"><svg width="15" height="17" viewBox="0 0 15 17"><path d="M3.7 6.2 L7.5 10 L11.3 6.2" fill="none" stroke="#4d6185" stroke-width="2.1"/></svg></div>
<div class="t" id="t70" style="left:124.60px;top:425px;transform:scaleX(0.9216);">UNKNOWN</div>
<div class="i" style="left:121px;top:447px;width:105px;height:21px"></div>
<div class="cb" style="left:210px;top:450px;width:15px;height:17px"><svg width="15" height="17" viewBox="0 0 15 17"><path d="M3.7 6.2 L7.5 10 L11.3 6.2" fill="none" stroke="#4d6185" stroke-width="2.1"/></svg></div>
<div class="t" id="t71" style="left:125.50px;top:452px;transform:scaleX(1.0042);">$ U.S.</div>
<div class="i" style="left:121px;top:475px;width:105px;height:19px"></div>
<div class="t" id="t72" style="left:179.00px;top:479px;">0</div>
<div class="i" style="left:121px;top:502px;width:105px;height:21px"></div>
<div class="cb" style="left:210px;top:505px;width:15px;height:17px"><svg width="15" height="17" viewBox="0 0 15 17"><path d="M3.7 6.2 L7.5 10 L11.3 6.2" fill="none" stroke="#4d6185" stroke-width="2.1"/></svg></div>
<div class="t" id="t73" style="left:126.20px;top:507px;transform:scaleX(0.9286);">UNKNOWN</div>
<div class="t" id="t74" style="left:249.00px;top:370px;transform:scaleX(0.9875);">Default Commodity:</div>
<div class="t" id="t75" style="left:249.00px;top:398px;transform:scaleX(0.9081);">Bill Miles:</div>
<div class="t" id="t76" style="left:249.00px;top:426px;transform:scaleX(0.9970);">EDI 210:</div>
<div class="t" id="t77" style="left:249.00px;top:453px;transform:scaleX(0.9393);">Slack Time:</div>
<div class="t" id="t78" style="left:249.00px;top:479px;transform:scaleX(0.9938);">Pallet Count:</div>
<div class="t" id="t79" style="left:249.00px;top:506px;transform:scaleX(0.9636);">Booking:</div>
<div class="i" style="left:367px;top:365px;width:98px;height:21px"></div>
<div class="cb" style="left:449px;top:368px;width:15px;height:17px"><svg width="15" height="17" viewBox="0 0 15 17"><path d="M3.7 6.2 L7.5 10 L11.3 6.2" fill="none" stroke="#4d6185" stroke-width="2.1"/></svg></div>
<div class="t" id="t80" style="left:372.40px;top:370px;transform:scaleX(0.9298);">UNKNOWN</div>
<div class="i" style="left:367px;top:393px;width:98px;height:21px"></div>
<div class="cb" style="left:449px;top:396px;width:15px;height:17px"><svg width="15" height="17" viewBox="0 0 15 17"><path d="M3.7 6.2 L7.5 10 L11.3 6.2" fill="none" stroke="#4d6185" stroke-width="2.1"/></svg></div>
<div class="t" id="t81" style="left:371.70px;top:398px;transform:scaleX(0.9312);">A - ALK S - SHO</div>
<div class="i" style="left:367px;top:420px;width:98px;height:21px"></div>
<div class="cb" style="left:449px;top:423px;width:15px;height:17px"><svg width="15" height="17" viewBox="0 0 15 17"><path d="M3.7 6.2 L7.5 10 L11.3 6.2" fill="none" stroke="#4d6185" stroke-width="2.1"/></svg></div>
<div class="t" id="t82" style="left:370.70px;top:425px;transform:scaleX(0.9883);">Print Only</div>
<div class="i" style="left:367px;top:449px;width:98px;height:19px"></div>
<div class="t" id="t83" style="left:425.00px;top:453px;">0</div>
<div class="i" style="left:367px;top:475px;width:98px;height:19px"></div>
<div class="t" id="t84" style="left:425.00px;top:479px;">0</div>
<div class="i" style="left:367px;top:502px;width:98px;height:21px"></div>
<div class="cb" style="left:449px;top:505px;width:15px;height:17px"><svg width="15" height="17" viewBox="0 0 15 17"><path d="M3.7 6.2 L7.5 10 L11.3 6.2" fill="none" stroke="#4d6185" stroke-width="2.1"/></svg></div>
<div class="t" id="t85" style="left:371.70px;top:507px;transform:scaleX(0.9126);">WARREN</div>
<div class="hl" style="left:10px;top:498px;width:230px;height:26px"></div>
<div class="p" style="left:494px;top:340px;width:413px;height:189px;"><div class="ph" style="height:18px"></div><div class="pl" style="top:18px"></div><div class="pb" style="top:19px;height:169px"></div><svg class="pc" width="413" height="189" viewBox="0 0 413 189"><path d="M412.5 0 V186.5 L410.5 188.5 H2 L0.5 187" fill="none" stroke="#06309a" stroke-width="1"/><path d="M0.5 0 V187" fill="none" stroke="#9db9ef" stroke-width="1"/></svg></div>
<div class="t" id="t86" style="left:497.70px;top:343px;transform:scaleX(0.9802);">Directions</div>
<div class="i" style="left:499px;top:365px;width:370px;height:158px"></div>
<div class="t" id="t87" style="left:504.00px;top:368px;transform:scaleX(0.9923);">Corner of Greyton and Euclid Ave.</div>
<div class="btn" style="left:877px;top:503px;width:21px;height:19px;border-color:#1c4a84;background:linear-gradient(#fbfaf5,#f4f2ea 75%,#e6dfd0)"><svg width="21" height="19" viewBox="0 0 21 19" style="position:absolute;left:0;top:0"><defs><linearGradient id="pg" x1="0" y1="0" x2="1" y2="0"><stop offset="0" stop-color="#f4f8ff"/><stop offset="0.55" stop-color="#c4d2f0"/><stop offset="1" stop-color="#8ea2c8"/></linearGradient></defs><path d="M2.2 9 L5.8 6.2 H17 V13 L13.8 16 Q8 17 2.6 15.8 Z" fill="#64769e"/><path d="M2.6 9.4 H13.4 V15.2 Q8 16.4 3.2 15.2 Z" fill="url(#pg)"/><path d="M13.4 9.4 L16.6 6.6 V12.6 L13.4 15.2Z" fill="#6278a2"/><path d="M2.6 9.4 L6 6.4 H16.6 L13.4 9.4Z" fill="#8a9cc0"/><path d="M5 8.8 L7.8 3.2 H16 L13.4 8.8Z" fill="#fbfcff" stroke="#8c9cc0" stroke-width="0.7"/><path d="M8.2 5 H13.6 M7.4 6.6 H12.8" stroke="#b4c0da" stroke-width="0.7"/><rect x="11" y="11.8" width="3.2" height="3" fill="#18c818"/><rect x="12" y="12.6" width="1.2" height="1.2" fill="#a8f040"/></svg></div>
</body></html>
